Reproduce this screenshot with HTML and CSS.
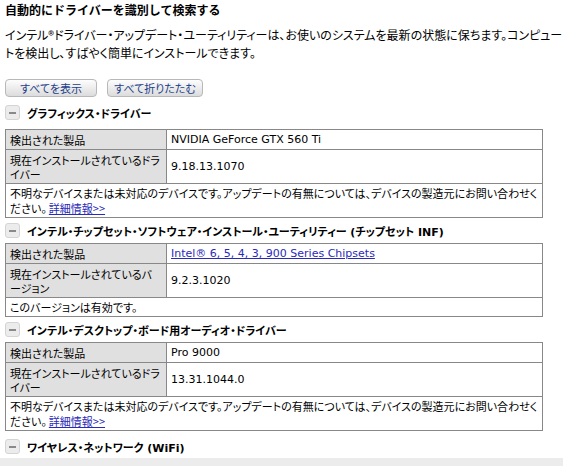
FILE: index.html
```html
<!DOCTYPE html>
<html lang="ja">
<head>
    <meta charset="UTF-8">
    <title>ドライバー・アップデート・ユーティリティー</title>
    <link rel="stylesheet" href="styles.css">
</head>
<body>
<div class="page">
    <h1 class="pageTitle">自動的にドライバーを識別して検索する</h1>
    <p class="intro">インテル®ドライバー・アップデート・ユーティリティーは、お使いのシステムを最新の状態に保ちます。コンピュー<br>トを検出し、すばやく簡単にインストールできます。</p>

    <div class="btnRow">
        <a class="btn btnShow">すべてを表示</a>
        <a class="btn btnFold">すべて折りたたむ</a>
    </div>

    <div class="result resultFirst">
        <h2 class="resultHead"><span class="toggle"></span>グラフィックス・ドライバー</h2>
        <table class="resultTable">
            <tr>
                <th>検出された製品</th>
                <td>NVIDIA GeForce GTX 560 Ti</td>
            </tr>
            <tr>
                <th>現在インストールされているドライバー</th>
                <td>9.18.13.1070</td>
            </tr>
            <tr>
                <td class="note" colspan="2">不明なデバイスまたは未対応のデバイスです。アップデートの有無については、デバイスの製造元にお問い合わせください。<a href="#">詳細情報&gt;&gt;</a></td>
            </tr>
        </table>
    </div>

    <div class="result">
        <h2 class="resultHead"><span class="toggle"></span>インテル・チップセット・ソフトウェア・インストール・ユーティリティー (チップセット INF)</h2>
        <table class="resultTable">
            <tr>
                <th>検出された製品</th>
                <td><a href="#">Intel® 6, 5, 4, 3, 900 Series Chipsets</a></td>
            </tr>
            <tr>
                <th>現在インストールされているバージョン</th>
                <td>9.2.3.1020</td>
            </tr>
            <tr>
                <td class="note" colspan="2">このバージョンは有効です。</td>
            </tr>
        </table>
    </div>

    <div class="result">
        <h2 class="resultHead"><span class="toggle"></span>インテル・デスクトップ・ボード用オーディオ・ドライバー</h2>
        <table class="resultTable">
            <tr>
                <th>検出された製品</th>
                <td>Pro 9000</td>
            </tr>
            <tr>
                <th>現在インストールされているドライバー</th>
                <td>13.31.1044.0</td>
            </tr>
            <tr>
                <td class="note" colspan="2">不明なデバイスまたは未対応のデバイスです。アップデートの有無については、デバイスの製造元にお問い合わせください。<a href="#">詳細情報&gt;&gt;</a></td>
            </tr>
        </table>
    </div>

    <div class="result resultLast">
        <h2 class="resultHead"><span class="toggle"></span>ワイヤレス・ネットワーク (WiFi)</h2>
    </div>
</div>
<div class="footBar"></div>
</body>
</html>
```

FILE: styles.css
```css
body {
    margin: 0;
    background: #fff;
    color: #000;
    font-family: "DejaVu Sans", "Noto Sans CJK JP", sans-serif;
    font-size: 11px;
}

.page {
    padding: 2px 5px 0;
}

.pageTitle {
    margin: 0;
    font-family: "Noto Sans CJK JP", sans-serif;
    font-size: 12px;
    line-height: 16px;
    font-weight: bold;
}

.intro {
    margin: 8px -7px 0 0;
    font-family: "Noto Sans CJK JP", sans-serif;
    font-size: 12px;
    line-height: 18px;
    font-feature-settings: "palt";
}

/* button row */
.btnRow {
    display: flex;
    gap: 10px;
    margin-top: 17px;
}

.btn {
    display: block;
    height: 16px;
    line-height: 16px;
    border: 1px solid #b8b8b8;
    border-radius: 4px;
    background: linear-gradient(#fdfdfd, #e9e9e9 60%, #dcdcdc);
    color: #1d3f8c;
    font-family: "Noto Sans CJK JP", sans-serif;
    font-size: 11px;
    text-align: center;
    font-feature-settings: "palt";
}

.btnShow {
    width: 90px;
}

.btnFold {
    width: 94px;
}

/* result sections */
.result {
    margin-top: 5px;
}

.resultFirst {
    margin-top: 8px;
}

.resultLast {
    margin-top: 8px;
}

.resultHead {
    display: flex;
    align-items: center;
    gap: 7px;
    height: 15px;
    margin: 0 0 5px;
    font-family: "DejaVu Sans", "Noto Sans CJK JP", sans-serif;
    font-size: 11px;
    font-weight: bold;
    font-feature-settings: "palt";
}

.resultFirst .resultHead {
    margin-bottom: 9px;
}

.resultLast .resultHead {
    margin-bottom: 0;
}

.toggle {
    position: relative;
    flex: none;
    width: 13px;
    height: 13px;
    border: 1px solid #d4d4d4;
    border-radius: 3px;
    background: #ececec;
}

.toggle:after {
    content: '';
    position: absolute;
    left: 3px;
    top: 6px;
    width: 7px;
    height: 2px;
    background: #8a8a8a;
}

.resultTable {
    width: 538px;
    border-collapse: collapse;
    border: 1px solid #888;
}

.resultTable th,
.resultTable td {
    border: 1px solid #888;
    padding: 3px 4px 2px;
    line-height: 14px;
    text-align: left;
    vertical-align: middle;
    font-weight: normal;
    font-feature-settings: "palt";
}

.resultTable th {
    width: 152px;
    background: #e0e0e0;
    font-family: "Noto Sans CJK JP", sans-serif;
}

.resultTable td {
    background: #fff;
}

.resultTable .note {
    padding: 2px 4px 1px;
    line-height: 15px;
    font-family: "Noto Sans CJK JP", sans-serif;
}

.resultTable a {
    color: #2a2ab8;
    text-decoration: underline;
}

.note a {
    margin-left: 2px;
}

.footBar {
    margin-top: 4px;
    height: 20px;
    background: #ececec;
}
```
